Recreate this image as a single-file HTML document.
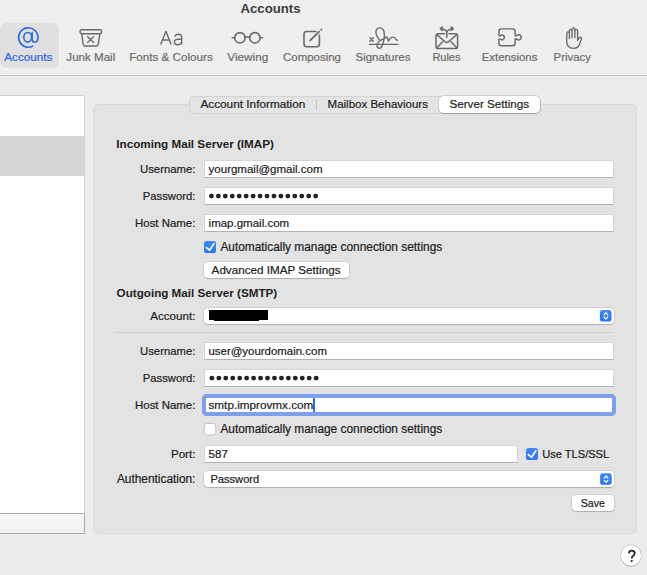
<!DOCTYPE html>
<html><head><meta charset="utf-8">
<style>
*{box-sizing:border-box;margin:0;padding:0}
html,body{width:647px;height:575px;overflow:hidden}
body{background:#ececec;font-family:"Liberation Sans",sans-serif;color:#202020;position:relative}
.t{position:absolute;white-space:nowrap;line-height:14px;-webkit-text-stroke:0.2px currentColor}
.b{position:absolute}
.fld{position:absolute;background:#fff;border:1px solid #d6d6d6;border-bottom-color:#b2b2b2}
.btn{position:absolute;background:#fff;border-radius:4px;box-shadow:0 0 0 0.5px rgba(0,0,0,.17),0 1px 1px rgba(0,0,0,.17)}
#ic{position:absolute;left:0;top:0}
#ic .s{fill:none;stroke:#6a6a6a;stroke-width:1.4;stroke-linecap:round;stroke-linejoin:round}
</style></head><body>
<div class="b" style="left:0;top:0;width:647px;height:75px;background:#efefef"></div><div class="b" style="left:0;top:74px;width:647px;height:1px;background:#f3f3f3"></div><div class="b" style="left:0;top:75px;width:647px;height:1px;background:#c4c4c4"></div><div class="b" style="left:0;top:76px;width:647px;height:1px;background:#eeeeee"></div>
<div class="b" style="left:0;top:23px;width:59px;height:45px;background:#e0e0e0;border-radius:6px"></div>
<div class="t" style="top:2.00px;font-size:13.2px;font-weight:700;-webkit-text-stroke:0;color:#3b3b3b;left:170.50px;width:200px;text-align:center;">Accounts</div>
<div class="t" style="top:49.80px;font-size:11.68px;color:#2d64dc;left:-71.70px;width:200px;text-align:center;">Accounts</div>
<div class="t" style="top:49.80px;font-size:11.59px;color:#6b6b6b;left:-9.20px;width:200px;text-align:center;">Junk Mail</div>
<div class="t" style="top:49.80px;font-size:11.67px;color:#6b6b6b;left:71.00px;width:200px;text-align:center;">Fonts &amp; Colours</div>
<div class="t" style="top:49.80px;font-size:11.78px;color:#6b6b6b;left:147.80px;width:200px;text-align:center;">Viewing</div>
<div class="t" style="top:49.80px;font-size:11.47px;color:#6b6b6b;left:212.00px;width:200px;text-align:center;">Composing</div>
<div class="t" style="top:49.80px;font-size:11.5px;color:#6b6b6b;left:283.00px;width:200px;text-align:center;">Signatures</div>
<div class="t" style="top:49.80px;font-size:10.96px;color:#6b6b6b;left:346.40px;width:200px;text-align:center;">Rules</div>
<div class="t" style="top:49.80px;font-size:11.37px;color:#6b6b6b;left:409.60px;width:200px;text-align:center;">Extensions</div>
<div class="t" style="top:49.80px;font-size:11.43px;color:#6b6b6b;left:472.30px;width:200px;text-align:center;">Privacy</div>
<div class="b" style="left:-2px;top:95px;width:87px;height:420px;background:#fff;border:1px solid #d2d2d2"></div>
<div class="b" style="left:0;top:136px;width:84px;height:40px;background:#d6d6d6"></div>
<div class="b" style="left:-2px;top:513px;width:87px;height:21px;background:linear-gradient(#f8f8f8,#f2f2f2);border:1px solid #acacac"></div>
<div class="b" style="left:93px;top:104px;width:544px;height:430px;background:#e3e3e3;border:1px solid #d9d9d9;border-radius:5px"></div>
<div class="b" style="left:189px;top:96px;width:352px;height:18px;background:#e4e4e4;border:1px solid #d3d3d3;border-radius:5px"></div>
<div class="b" style="left:316px;top:100px;width:1px;height:10px;background:#c2c2c2"></div>
<div class="b" style="left:438.7px;top:96.4px;width:101.6px;height:17px;background:#fff;border-radius:4.5px;box-shadow:0 0 0 0.5px rgba(0,0,0,.2),0 0.5px 1px rgba(0,0,0,.15)"></div>
<div class="t" style="top:97.10px;font-size:11.8px;color:#222;left:200.40px;">Account Information</div>
<div class="t" style="top:97.10px;font-size:11.5px;color:#222;left:327.60px;">Mailbox Behaviours</div>
<div class="t" style="top:97.10px;font-size:11.65px;color:#222;left:449.50px;">Server Settings</div>
<div class="t" style="top:137.40px;font-size:11.68px;font-weight:700;-webkit-text-stroke:0;color:#222;left:116.30px;">Incoming Mail Server (IMAP)</div>
<div class="t" style="top:162.00px;font-size:11.33px;right:451.60px;text-align:right;">Username:</div>
<div class="t" style="top:189.30px;font-size:11.29px;right:451.60px;text-align:right;">Password:</div>
<div class="t" style="top:216.10px;font-size:11.45px;right:451.60px;text-align:right;">Host Name:</div>
<div class="fld" style="left:204px;top:160px;width:410px;height:18px"></div>
<div class="fld" style="left:204px;top:187px;width:410px;height:18px"></div>
<div class="fld" style="left:204px;top:214px;width:410px;height:18px"></div>
<div class="t" style="top:162.30px;font-size:11.5px;left:208.60px;">yourgmail@gmail.com</div>
<div class="t" style="top:216.10px;font-size:11.51px;left:208.60px;">imap.gmail.com</div>
<div class="t" style="top:239.80px;font-size:11.89px;left:220.40px;">Automatically manage connection settings</div>
<div class="btn" style="left:203.5px;top:262px;width:145.3px;height:16.4px"></div>
<div class="t" style="top:263.30px;font-size:11.68px;left:211.60px;">Advanced IMAP Settings</div>
<div class="t" style="top:285.80px;font-size:11.66px;font-weight:700;-webkit-text-stroke:0;color:#222;left:116.60px;">Outgoing Mail Server (SMTP)</div>
<div class="t" style="top:308.50px;font-size:11.6px;right:451.60px;text-align:right;">Account:</div>
<div class="btn" style="left:204px;top:307.8px;width:410px;height:16.4px"></div>
<div class="b" style="left:208.7px;top:309.7px;width:59.4px;height:10px;background:#000"></div>
<div class="b" style="left:213.9px;top:319px;width:45.3px;height:1.8px;background:#000"></div>
<div class="b" style="left:116px;top:331.5px;width:498px;height:1px;background:#d0d0d0"></div>
<div class="t" style="top:343.60px;font-size:11.33px;right:451.60px;text-align:right;">Username:</div>
<div class="t" style="top:371.00px;font-size:11.29px;right:451.60px;text-align:right;">Password:</div>
<div class="t" style="top:397.90px;font-size:11.45px;right:451.60px;text-align:right;">Host Name:</div>
<div class="fld" style="left:204px;top:342px;width:410px;height:18px"></div>
<div class="fld" style="left:204px;top:369px;width:410px;height:18px"></div>
<div class="fld" style="left:204px;top:396px;width:410px;height:18px"></div>
<div class="b" style="left:202px;top:394px;width:414px;height:22px;border:4px solid #7ea0ec;border-radius:4.5px"></div>
<div class="t" style="top:343.60px;font-size:11.44px;left:208.50px;">user@yourdomain.com</div>
<div class="t" style="top:397.90px;font-size:11.72px;left:208.50px;">smtp.improvmx.com</div>
<div class="b" style="left:313.4px;top:398px;width:1.6px;height:13.8px;background:#2a66ec;border-radius:0.8px"></div>
<div class="t" style="top:421.90px;font-size:11.89px;left:220.40px;">Automatically manage connection settings</div>
<div class="t" style="top:446.60px;font-size:11.6px;right:451.60px;text-align:right;">Port:</div>
<div class="fld" style="left:204px;top:445px;width:314px;height:18px"></div>
<div class="t" style="top:446.60px;font-size:11.5px;left:208.60px;">587</div>
<div class="t" style="top:447.10px;font-size:11.1px;left:542.20px;">Use TLS/SSL</div>
<div class="t" style="top:471.80px;font-size:11.86px;right:451.60px;text-align:right;">Authentication:</div>
<div class="btn" style="left:203.5px;top:471px;width:410.5px;height:16.3px"></div>
<div class="t" style="top:471.80px;font-size:11.13px;left:210.40px;">Password</div>
<div class="btn" style="left:572px;top:495px;width:42px;height:16px"></div>
<div class="t" style="top:496.00px;font-size:10.6px;left:580.80px;">Save</div>
<div class="b" style="left:620.6px;top:545.4px;width:20.6px;height:20.6px;border-radius:50%;background:#fff;box-shadow:0 0 0 0.5px rgba(0,0,0,.2),0 0.5px 1px rgba(0,0,0,.2)"></div>
<svg id="ic" width="647" height="575" viewBox="0 0 647 575"><defs><linearGradient id="cbg" x1="0" y1="0" x2="0" y2="1"><stop offset="0" stop-color="#4089f8"/><stop offset="1" stop-color="#2f74f0"/></linearGradient></defs><g fill="none" stroke="#2f6ae0" stroke-width="1.6" stroke-linecap="round"><path d="M32.6 46.2 A9.7 9.7 0 1 1 38 37.8 Q37.9 42.2 35 42.2 Q32.2 42.2 32.1 39.4 L32.1 32.6"/><ellipse cx="27.7" cy="37.3" rx="3.9" ry="4.85"/></g><g class="s"><rect x="80" y="29.8" width="21.6" height="3.9" rx="1.6"/><path d="M81.8 33.9 L83.2 44.4 Q83.5 46 85.1 46 L96.4 46 Q98 46 98.3 44.4 L99.8 33.9"/><path d="M87.6 36.8 L93.6 42.6 M93.6 36.8 L87.6 42.6"/></g><g class="s" style="stroke-width:1.4;stroke-linecap:butt"><path d="M160.7 44.6 L165.9 31.3 L171.1 44.6 M162.3 40 H169.5"/><path d="M174.6 36.7 Q175.6 34.2 178.3 34.2 Q181.7 34.2 181.7 37.6 V44.6 M181.7 39.3 H178.2 Q174.3 39.4 174.3 42 Q174.3 44.7 177.4 44.7 Q180.6 44.7 181.7 42.3"/></g><g class="s" style="stroke-width:1.6"><circle cx="239.9" cy="37.8" r="5.2"/><circle cx="254.9" cy="37.8" r="5.2"/><path d="M245.1 37.3 Q247.4 36.3 249.7 37.3 M232.3 37.8 L234.7 37.8 M260.1 37.8 L262.5 37.8"/></g><g class="s" style="stroke-width:1.6"><path d="M316 31.5 H306.6 Q304 31.5 304 34.1 V44.1 Q304 46.7 306.6 46.7 H316.8 Q319.4 46.7 319.4 44.1 V35"/><path d="M309.1 41.6 L309.55 39.65 L318.95 30.45 L320.25 31.75 L310.85 40.95 Z" style="fill:#6a6a6a;stroke:none"/><path d="M320.05 29.55 L321.25 28.35 L322.55 29.65 L321.35 30.85 Z" style="fill:#6a6a6a;stroke:none"/></g><g class="s" style="stroke-width:1.4"><path d="M369.4 44.4 H397.8"/><path d="M370 37.8 L373.2 41.2 M373.2 37.8 L370 41.2"/><path d="M380 40.6 C377 37.5 374.8 32.5 376.4 29.6 C378 27 382.6 27.2 383.9 31.2 C385.2 35.5 383.6 43 381.8 46.6 C380.5 49.2 376.6 48.8 377 45.2 C377.4 42 381.5 39.5 384.3 38.6 C385.6 38 386.4 36.2 387.1 37.2 L388.5 41.2 C389.5 38.5 391.5 37 393.4 37.1 C395 37.2 395.6 40.2 397.4 40.4"/></g><g class="s" style="stroke-width:1.5"><path d="M444.6 33.8 H438.2 Q436 33.8 436 36 V46.4 Q436 48.6 438.2 48.6 H455.4 Q457.6 48.6 457.6 46.4 V36 Q457.6 33.8 455.4 33.8 H449"/><path d="M436.8 34.6 L445.4 42 Q446.8 43.2 448.2 42 L456.8 34.6"/><path d="M436.8 47.8 L442.6 41.8 M456.8 47.8 L451 41.8"/><path d="M446.8 37.6 V32.4 Q446.4 29.4 441 28.7 M446.8 32.4 Q447.2 29.4 452.6 28.7"/><path d="M442.4 26.9 L440.3 28.6 L442.4 30.5 M451.2 26.9 L453.3 28.6 L451.2 30.5"/></g><g class="s" style="stroke-width:1.45"><path d="M498.87 35.6 V31.4 Q498.87 28.87 501.4 28.87 H512.6 Q515.15 28.87 515.15 31.4 V35.6 L516.37 36 A2.65 2.65 0 1 1 516.37 38.7 L515.15 39.1 V43.2 Q515.15 45.74 512.6 45.74 H501.4 Q498.87 45.74 498.87 43.2 V39.2 L500.06 38.9 A2.43 2.43 0 1 0 500.06 35.9 Z"/></g><g class="s" style="stroke-width:1.35"><path d="M566.8 42 V33.2 A1.3 1.3 0 0 1 569.4 33.2 V30.6 A1.3 1.3 0 0 1 572 30.6 V29.3 A1.4 1.4 0 0 1 574.8 29.3 V30.8 A1.4 1.4 0 0 1 577.6 30.8 V40.4 L579.2 37.9 A1.3 1.3 0 0 1 581.5 39.1 L579 45.4 Q577.6 48.3 573.6 48.3 Q566.8 48.3 566.8 42 Z"/><path d="M569.4 33.2 V38.6 M572 30.6 V37.8 M574.8 29.3 V37.8"/></g><g fill="#222"><circle cx="211.40" cy="196.10" r="2.45"/><circle cx="218.35" cy="196.10" r="2.45"/><circle cx="225.30" cy="196.10" r="2.45"/><circle cx="232.25" cy="196.10" r="2.45"/><circle cx="239.20" cy="196.10" r="2.45"/><circle cx="246.15" cy="196.10" r="2.45"/><circle cx="253.10" cy="196.10" r="2.45"/><circle cx="260.05" cy="196.10" r="2.45"/><circle cx="267.00" cy="196.10" r="2.45"/><circle cx="273.95" cy="196.10" r="2.45"/><circle cx="280.90" cy="196.10" r="2.45"/><circle cx="287.85" cy="196.10" r="2.45"/><circle cx="294.80" cy="196.10" r="2.45"/><circle cx="301.75" cy="196.10" r="2.45"/><circle cx="308.70" cy="196.10" r="2.45"/><circle cx="315.65" cy="196.10" r="2.45"/><circle cx="211.90" cy="378.10" r="2.45"/><circle cx="218.85" cy="378.10" r="2.45"/><circle cx="225.80" cy="378.10" r="2.45"/><circle cx="232.75" cy="378.10" r="2.45"/><circle cx="239.70" cy="378.10" r="2.45"/><circle cx="246.65" cy="378.10" r="2.45"/><circle cx="253.60" cy="378.10" r="2.45"/><circle cx="260.55" cy="378.10" r="2.45"/><circle cx="267.50" cy="378.10" r="2.45"/><circle cx="274.45" cy="378.10" r="2.45"/><circle cx="281.40" cy="378.10" r="2.45"/><circle cx="288.35" cy="378.10" r="2.45"/><circle cx="295.30" cy="378.10" r="2.45"/><circle cx="302.25" cy="378.10" r="2.45"/><circle cx="309.20" cy="378.10" r="2.45"/><circle cx="316.15" cy="378.10" r="2.45"/></g><rect x="204" y="241" width="12" height="12" rx="2.6" fill="url(#cbg)"/><path d="M206.3 247.6 L209.6 250.2 L213.8 243.8" fill="none" stroke="#fff" stroke-width="1.7" stroke-linecap="round" stroke-linejoin="round"/><rect x="526" y="448.1" width="12" height="12" rx="2.6" fill="url(#cbg)"/><path d="M528.3 454.70000000000005 L531.6 457.3 L535.8 450.90000000000003" fill="none" stroke="#fff" stroke-width="1.7" stroke-linecap="round" stroke-linejoin="round"/><rect x="204.25" y="423.4" width="11.5" height="11.5" rx="2.6" fill="#fff" stroke="#b0b0b0" stroke-width="0.7"/><rect x="599.9" y="309.9" width="11.6" height="11.6" rx="2.6" fill="url(#cbg)"/><path d="M604.1 314.79999999999995 L605.9 312.7 L607.6999999999999 314.79999999999995 M604.1 317.0 L605.9 319.09999999999997 L607.6999999999999 317.0" fill="none" stroke="#fff" stroke-width="1.25" stroke-linecap="round" stroke-linejoin="round"/><rect x="600.1" y="473.2" width="11.6" height="11.6" rx="2.6" fill="url(#cbg)"/><path d="M604.3000000000001 478.09999999999997 L606.1 476.0 L607.9 478.09999999999997 M604.3000000000001 480.3 L606.1 482.4 L607.9 480.3" fill="none" stroke="#fff" stroke-width="1.25" stroke-linecap="round" stroke-linejoin="round"/><path d="M628.9 553.4 Q629.1 550.7 631.7 550.7 Q634.7 550.7 634.7 553.3 Q634.7 554.9 633 555.9 Q631.7 556.7 631.7 558.4" fill="none" stroke="#222" stroke-width="1.7"/><circle cx="631.7" cy="561.1" r="1.05" fill="#222"/></svg>
</body></html>
